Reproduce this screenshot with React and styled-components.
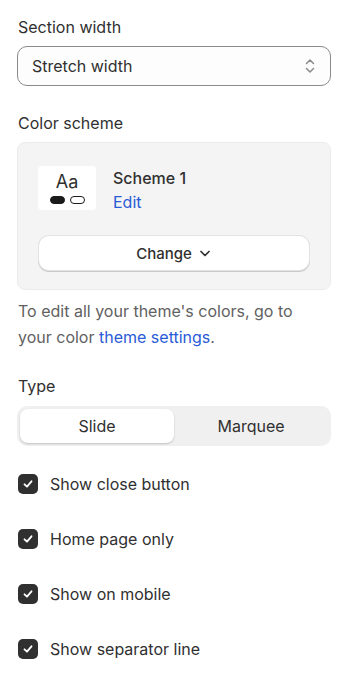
import React from 'react';
import styled, { createGlobalStyle } from 'styled-components';

const Global = createGlobalStyle`
  body {
    margin: 0;
    background: #ffffff;
    font-family: Inter, "Noto Sans", sans-serif;
    color: #303030;
    -webkit-font-smoothing: antialiased;
  }
`;

const Page = styled.div`
  width: 350px;
  padding: 16px 19px 0 17px;
  box-sizing: border-box;
  display: flex;
  flex-direction: column;
`;

const Label = styled.div`
  font-size: 16px;
  line-height: 22px;
  color: #303030;
  margin-bottom: ${p => p.gap || 8}px;
  padding-left: 1px;
`;

const Select = styled.div`
  height: 40px;
  border: 1px solid #8a8a8a;
  border-radius: 10px;
  background: #fdfdfd;
  box-sizing: border-box;
  display: flex;
  align-items: center;
  justify-content: space-between;
  padding: 0 14px 0 14px;
  font-size: 16px;
  color: #303030;
  margin-bottom: 26px;
  margin-top: -1px;
`;

const Panel = styled.div`
  background: #f4f4f4;
  border: 1px solid #ebebeb;
  border-radius: 8px;
  padding: 23px 20px 19px 20px;
  display: flex;
  flex-direction: column;
  gap: 23px;
  margin-bottom: 8px;
`;

const SchemeRow = styled.div`
  display: flex;
  align-items: flex-start;
  gap: 17px;
`;

const Swatch = styled.div`
  width: 58px;
  height: 44px;
  background: #ffffff;
  border-radius: 4px;
  box-sizing: border-box;
  display: flex;
  flex-direction: column;
  align-items: center;
  padding-top: 6px;
`;

const SwatchText = styled.div`
  font-size: 18px;
  line-height: 20px;
  color: #303030;
`;

const Pills = styled.div`
  display: flex;
  gap: 5px;
  margin-top: 4px;
`;

const Pill = styled.span`
  width: 15px;
  height: 8px;
  border-radius: 4px;
  box-sizing: border-box;
  background: ${p => (p.filled ? '#1a1a1a' : '#ffffff')};
  border: 1.5px solid #1a1a1a;
`;

const SchemeInfo = styled.div`
  display: flex;
  flex-direction: column;
  gap: 2px;
  padding-top: 1px;
`;

const SchemeName = styled.div`
  font-size: 16px;
  line-height: 22px;
  font-weight: 500;
  color: #303030;
`;

const Link = styled.a`
  color: #2a5bd7;
  text-decoration: none;
  cursor: pointer;
`;

const EditLink = styled(Link)`
  font-size: 16px;
  line-height: 22px;
`;

const ChangeButton = styled.button`
  height: 34px;
  border: none;
  border-radius: 10px;
  background: #ffffff;
  box-shadow: 0 0 0 1px #e3e3e3, 0 1px 0 1px #c9c9c9;
  display: flex;
  align-items: center;
  justify-content: center;
  gap: 6px;
  font-family: inherit;
  font-size: 15px;
  font-weight: 550;
  color: #303030;
  margin: 0 1px;
`;

const Help = styled.p`
  margin: 0 10px 25px 1px;
  font-size: 16px;
  line-height: 26px;
  color: #616161;
`;

const Segmented = styled.div`
  display: grid;
  grid-template-columns: 1fr 1fr;
  background: #f0f0f0;
  border-radius: 10px;
  padding: 3px;
  height: 40px;
  box-sizing: border-box;
  margin-bottom: 28px;
`;

const Segment = styled.div`
  display: flex;
  align-items: center;
  justify-content: center;
  border-radius: 8px;
  font-size: 16px;
  color: #303030;
  background: ${p => (p.active ? '#ffffff' : 'transparent')};
  box-shadow: ${p => (p.active ? '0 1px 2px rgba(0,0,0,0.2)' : 'none')};
`;

const Checks = styled.div`
  display: flex;
  flex-direction: column;
  gap: 35px;
`;

const CheckRow = styled.label`
  display: flex;
  align-items: center;
  gap: 12px;
  font-size: 16px;
  line-height: 20px;
  color: #303030;
  padding-left: 1px;
`;

const Box = styled.span`
  width: 20px;
  height: 20px;
  border-radius: 5px;
  background: #303030;
  display: flex;
  align-items: center;
  justify-content: center;
`;

const UpDown = () => (
  <svg width="12" height="18" viewBox="0 0 12 18" fill="none">
    <path d="M2.5 6.5 6 3l3.5 3.5M2.5 11.5 6 15l3.5-3.5" stroke="#8a8a8a" strokeWidth="1.5" strokeLinecap="round" strokeLinejoin="round" />
  </svg>
);

const ChevronDown = () => (
  <svg width="14" height="14" viewBox="0 0 14 14" fill="none">
    <path d="M3 5.5 7 9.5l4-4" stroke="#303030" strokeWidth="1.7" strokeLinecap="round" strokeLinejoin="round" />
  </svg>
);

const Check = () => (
  <svg width="12" height="12" viewBox="0 0 12 12" fill="none">
    <path d="M2.5 6.3 5 8.7 9.5 3.3" stroke="#ffffff" strokeWidth="1.8" strokeLinecap="round" strokeLinejoin="round" />
  </svg>
);

const options = ['Show close button', 'Home page only', 'Show on mobile', 'Show separator line'];

export default function App() {
  return (
    <Page>
      <Global />
      <Label gap={9}>Section width</Label>
      <Select>
        <span>Stretch width</span>
        <UpDown />
      </Select>

      <Label gap={8}>Color scheme</Label>
      <Panel>
        <SchemeRow>
          <Swatch>
            <SwatchText>Aa</SwatchText>
            <Pills>
              <Pill filled />
              <Pill />
            </Pills>
          </Swatch>
          <SchemeInfo>
            <SchemeName>Scheme 1</SchemeName>
            <EditLink>Edit</EditLink>
          </SchemeInfo>
        </SchemeRow>
        <ChangeButton>
          Change <ChevronDown />
        </ChangeButton>
      </Panel>

      <Help>
        To edit all your theme's colors, go to your color <Link>theme settings</Link>.
      </Help>

      <Label gap={9}>Type</Label>
      <Segmented>
        <Segment active>Slide</Segment>
        <Segment>Marquee</Segment>
      </Segmented>

      <Checks>
        {options.map(o => (
          <CheckRow key={o}>
            <Box>
              <Check />
            </Box>
            {o}
          </CheckRow>
        ))}
      </Checks>
    </Page>
  );
}
